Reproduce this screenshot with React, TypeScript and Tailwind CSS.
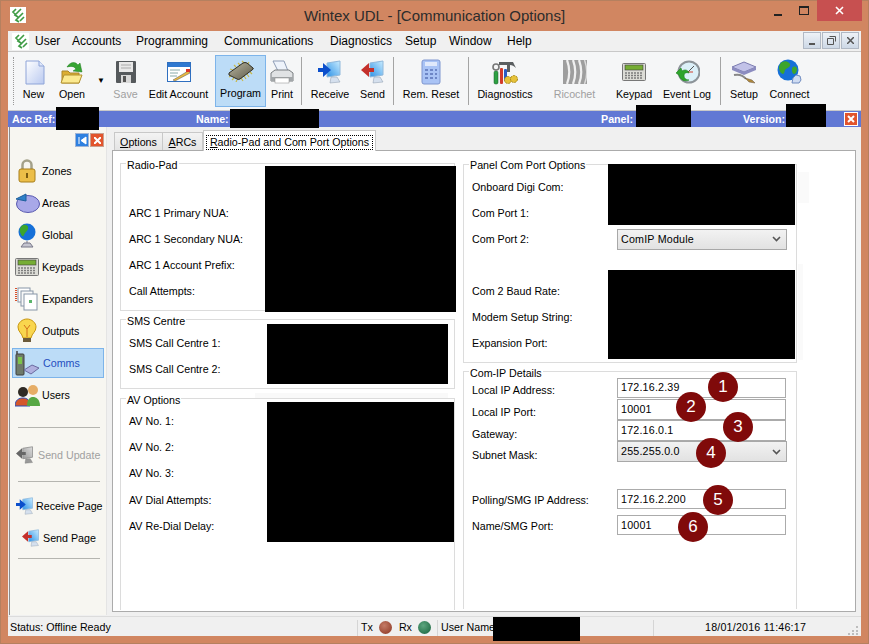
import React from "react";

const font = "font-['Liberation_Sans','Noto_Sans',sans-serif]";

function Logo() {
  return (
    <svg width="14" height="15" viewBox="0 0 14 15">
      <path d="M5 1L2 4l2 2M10 1L4 7l3 2M12 5L5 12l3 2M13 9l-4 4" stroke="#3f9c45" strokeWidth="1.7" fill="none" />
    </svg>
  );
}

function Doc() {
  return (
    <svg width="24" height="25" viewBox="0 0 24 25" className="ml-[3px]">
      <defs>
        <linearGradient id="doc" x1="0" y1="0" x2="1" y2="1">
          <stop offset="0" stopColor="#ffffff" />
          <stop offset="1" stopColor="#b9c9f0" />
        </linearGradient>
      </defs>
      <path d="M3 1h13l5 5v18H3z" fill="url(#doc)" stroke="#8ea4d8" />
      <path d="M16 1v5h5" fill="#dfe8fa" stroke="#8ea4d8" />
    </svg>
  );
}

function Folder() {
  return (
    <svg width="24" height="24" viewBox="0 0 24 24">
      <path d="M2 11h6l2 2h9v10H2z" fill="#dcae33" stroke="#a9862a" />
      <path d="M1 23l3-8h18l-3 8z" fill="#fbe98f" stroke="#b3912f" />
      <path d="M7 7c3-5 8-6 11-2l2-2 2 9-9-1 3-2c-2-3-5-3-9-2z" fill="#37a533" stroke="#1f7a1f" strokeWidth=".5" />
    </svg>
  );
}

function Floppy() {
  return (
    <svg width="22" height="24" viewBox="0 0 22 24">
      <rect x="1" y="1" width="20" height="22" rx="1" fill="#55595c" />
      <rect x="4" y="2" width="14" height="10" fill="#e8e8e8" />
      <path d="M6 5h10M6 8h10" stroke="#aaa" />
      <rect x="6" y="15" width="10" height="8" fill="#d8d8d8" />
      <rect x="8" y="16" width="3" height="6" fill="#555" />
    </svg>
  );
}

function EditAcct() {
  return (
    <svg width="24" height="20" viewBox="0 0 24 20">
      <rect x=".5" y=".5" width="23" height="19" fill="#fff" stroke="#2f6fc0" />
      <rect x="1" y="1" width="22" height="4" fill="#2f78d0" />
      <path d="M3 8h10M3 11h8M3 14h7" stroke="#8aa" />
      <path d="M6 18l15-9 2 2-15 8z" fill="#e8b840" stroke="#555" strokeWidth=".5" />
      <rect x="19" y="7" width="4" height="3" fill="#d9332b" />
    </svg>
  );
}

function Chip() {
  return (
    <svg width="26" height="22" viewBox="0 0 26 22">
      <defs>
        <linearGradient id="chip" x1="0" y1="0" x2="1" y2="1">
          <stop offset="0" stopColor="#b9b6a2" />
          <stop offset="1" stopColor="#5d5a48" />
        </linearGradient>
      </defs>
      <path d="M3 16l-2 1M6 18l-2 2M9 20l-1 2M13 18l2 3M16 16l2 3M19 14l2 3M22 12l2 2M5 10L2 9M8 7L6 5M12 5l-2-2M16 3l-2-2M20 4l1-2" stroke="#c9b84a" strokeWidth="1.2" />
      <path d="M1 13L15 3q2-1 4 0l6 5q1 1-1 2L12 19q-2 1-3 0l-8-4z" fill="url(#chip)" stroke="#2f2d22" />
    </svg>
  );
}

function Printer() {
  return (
    <svg width="24" height="25" viewBox="0 0 24 25">
      <path d="M3 1h11l4 10H8z" fill="#eef3fb" stroke="#8d9cb5" />
      <path d="M1 13l4-3h14l4 3v8H1z" fill="#e0e2e4" stroke="#787d80" />
      <rect x="1" y="17" width="22" height="4" fill="#a3a7aa" />
      <rect x="5" y="18" width="14" height="5" fill="#fff" stroke="#888" strokeWidth=".5" />
    </svg>
  );
}

function Monitor({ dir, small = false, gray = false }: { dir: "in" | "out"; small?: boolean; gray?: boolean }) {
  const s = small ? 18 : 24;
  const arrow = gray ? "#666" : dir === "in" ? "#0b4fcc" : "#c4302b";
  return (
    <svg width={s} height={s} viewBox="0 0 24 24">
      <defs>
        <linearGradient id="scr" x1="1" y1="0" x2="0" y2="1">
          <stop offset="0" stopColor="#c9ecff" />
          <stop offset="1" stopColor="#2d92e6" />
        </linearGradient>
        <linearGradient id="scrg" x1="1" y1="0" x2="0" y2="1">
          <stop offset="0" stopColor="#dddddd" />
          <stop offset="1" stopColor="#999999" />
        </linearGradient>
      </defs>
      <path d="M9 3l13-2v14L9 17z" fill={gray ? "url(#scrg)" : "url(#scr)"} stroke={gray ? "#888" : "#8fb8dc"} />
      <path d="M13 17h6l3 5-10 1z" fill={gray ? "#999" : "#d5e0ee"} stroke={gray ? "#777" : "#8899aa"} strokeWidth=".5" />
      {dir === "in" ? (
        <path d="M0 8h5V3l8 7-8 7v-5H0z" fill={arrow} />
      ) : (
        <path d="M13 8H8V3l-8 7 8 7v-5h5z" fill={arrow} />
      )}
    </svg>
  );
}

function Calc() {
  return (
    <svg width="20" height="26" viewBox="0 0 20 26">
      <rect x="1" y="1" width="18" height="24" rx="2" fill="#a9c3f5" stroke="#7f96cf" />
      <rect x="4" y="3" width="12" height="4" fill="#e0e9fb" />
      <path d="M4 11h3M9 11h3M14 11h2M4 15h3M9 15h3M14 15h2M4 19h3M9 19h3M14 19h2" stroke="#6d86c6" strokeWidth="2" />
    </svg>
  );
}

function Tools() {
  return (
    <svg width="26" height="25" viewBox="0 0 26 25">
      <path d="M7 2h14l3 6c-2-2-4-3-6-3v7h-3V5H7z" fill="#5a5e60" />
      <circle cx="4" cy="7" r="3" fill="none" stroke="#777" strokeWidth="1.6" />
      <rect x="2" y="11" width="4" height="13" rx="1.5" fill="#2ea043" stroke="#1a5c2a" strokeWidth=".5" />
      <rect x="8" y="8" width="3" height="16" rx="1" fill="#d23a2a" />
      <rect x="12" y="9" width="3" height="12" rx="1" fill="#2c5bc4" />
      <circle cx="16" cy="20" r="3.5" fill="#e6c23a" stroke="#a5861c" strokeDasharray="2 1" />
      <circle cx="22" cy="19" r="3.5" fill="#e6c23a" stroke="#a5861c" strokeDasharray="2 1" />
    </svg>
  );
}

function Ricochet() {
  return (
    <svg width="24" height="24" viewBox="0 0 24 24">
      <rect width="24" height="24" fill="#9e9e9e" />
      <path d="M4 0c3 8 3 16 0 24M10 0c3 8 3 16 0 24M16 0c3 8 3 16 0 24" stroke="#f0f0f0" strokeWidth="2.2" fill="none" />
      <path d="M21.5 0c3 8 3 16 0 24" stroke="#dcdcdc" strokeWidth="1.4" fill="none" />
    </svg>
  );
}

function KeypadIcon() {
  return (
    <svg width="24" height="18" viewBox="0 0 24 18">
      <rect x=".5" y=".5" width="23" height="17" rx="1" fill="#dcdcd6" stroke="#777" />
      <rect x="3" y="2" width="18" height="5" fill="#76ad34" stroke="#3c3c3c" strokeWidth=".6" />
      <path d="M3 10h18M3 12.5h18M3 15h18" stroke="#7c7c7c" strokeWidth="1.4" strokeDasharray="2 1" />
    </svg>
  );
}

function EventLog() {
  return (
    <svg width="25" height="25" viewBox="0 0 25 25">
      <circle cx="14" cy="12" r="10.5" fill="#dcf0f8" stroke="#8d9499" strokeWidth="2" />
      <path d="M13 12l6-6" stroke="#555" strokeWidth="1" />
      <path d="M13 12h5" stroke="#d0402f" strokeWidth="1" />
      <path d="M1 13l5-5 1 3c3-2 6-1 7 2-3-1-5 0-5 3 0 2 2 4 5 4-4 2-9 0-10-5z" fill="#2ea52c" stroke="#1c7f1c" strokeWidth=".6" />
    </svg>
  );
}

function SetupIcon() {
  return (
    <svg width="26" height="24" viewBox="0 0 26 24">
      <path d="M1 7l12-5 12 5-12 5z" fill="#c2c2e8" stroke="#7b7bb0" />
      <path d="M1 7v3l12 5 12-5V7l-12 5z" fill="#8c8cc0" />
      <path d="M3 15c5-1 9 0 12 4" stroke="#888" strokeWidth="2" fill="none" />
      <path d="M14 18l7 2 3 3-6-1z" fill="#b08a3c" stroke="#654" strokeWidth=".5" />
    </svg>
  );
}

function Globe() {
  return (
    <svg width="25" height="26" viewBox="0 0 25 26">
      <circle cx="11" cy="11" r="10.5" fill="#1670d8" />
      <path d="M5 3c4-2 7 0 8 2s-2 4-4 5-1 5-3 5-4-4-4-6 1-5 3-6zM16 8c2-1 4 0 4 2s-1 5-3 5-3-6-1-7z" fill="#3da52c" />
      <path d="M15 24l1-5 3-3 4 1 1 4-2 3z" fill="#cfdcf2" stroke="#6f8bc0" />
    </svg>
  );
}

function Lock() {
  return (
    <svg width="18" height="24" viewBox="0 0 18 24">
      <path d="M4.500 10V6a4.500 4.500 0 0 1 9 0v4" fill="none" stroke="#a4a18a" strokeWidth="2.500" />
      <rect x="1" y="10" width="16" height="13" rx="2" fill="#ecbe48" stroke="#a87e1b" />
      <rect x="8" y="14" width="2" height="5" fill="#7a5a10" />
    </svg>
  );
}

function Pie() {
  return (
    <svg width="25" height="20" viewBox="0 0 25 20">
      <ellipse cx="13" cy="11" rx="11.5" ry="8.500" fill="#a8a8e8" stroke="#5a5ab0" />
      <path d="M1 6l10-5v7z" fill="#2e80c8" stroke="#1f5f9c" />
    </svg>
  );
}

function Desk() {
  return (
    <svg width="20" height="25" viewBox="0 0 20 25">
      <circle cx="10" cy="9" r="8.500" fill="#1670d8" />
      <path d="M6 2c3-1 6 1 5 4s-3 3-4 6-3 0-4-3 1-6 3-7z" fill="#3da52c" />
      <path d="M10 18v2M4 24h12l-3-4H7z" fill="#c5c5d0" stroke="#778" />
    </svg>
  );
}

function Expander() {
  return (
    <svg width="24" height="24" viewBox="0 0 24 24">
      <path d="M1 1v14" stroke="#d94f2a" strokeWidth="2" strokeDasharray="1 1" />
      <rect x="3" y="1" width="12" height="14" fill="#fff" stroke="#8896a8" />
      <rect x="6" y="4" width="12" height="15" fill="#f8f8f8" stroke="#8896a8" />
      <rect x="9" y="7" width="13" height="16" fill="#fff" stroke="#8896a8" />
      <rect x="14" y="13" width="3" height="3" fill="#5bb56b" />
    </svg>
  );
}

function Bulb() {
  return (
    <svg width="20" height="26" viewBox="0 0 20 26">
      <path d="M10 1c5 0 9 4 9 8 0 5-4 6-5 11H6C5 15 1 14 1 9c0-4 4-8 9-8z" fill="#f9d64e" stroke="#c8960f" />
      <path d="M7 7l3 4 3-4M10 11v8" stroke="#d2701a" fill="none" />
      <rect x="6" y="20" width="8" height="4" fill="#6b5a3a" />
    </svg>
  );
}

function Phone() {
  return (
    <svg width="26" height="25" viewBox="0 0 26 25">
      <rect x="2" y="3" width="8" height="21" rx="1" fill="#6f7a6a" stroke="#3f3f3f" />
      <rect x="4" y="6" width="4" height="7" fill="#7cc34a" />
      <path d="M3 3V0" stroke="#444" strokeWidth="1.500" />
      <path d="M10 19l8-5 7 3-8 6z" fill="#b0b0de" stroke="#6a6aa0" />
    </svg>
  );
}

function UsersIcon() {
  return (
    <svg width="25" height="23" viewBox="0 0 25 23">
      <circle cx="8" cy="8" r="5" fill="#2f2a24" />
      <path d="M0 22c0-6 4-8 8-8s7 2 7 8z" fill="#d4572a" stroke="#2c4fb8" />
      <circle cx="18" cy="6" r="5" fill="#e6ad66" />
      <path d="M12 22c0-7 3-9 6-9s7 2 7 9z" fill="#56a743" />
    </svg>
  );
}

function ToolBtn({ label, icon, w, active, disabled }: { label: string; icon: React.ReactNode; w: string; active?: boolean; disabled?: boolean }) {
  return (
    <div
      className={`flex h-[52px] shrink-0 flex-col items-center justify-end pb-[6px] ${w} ${
        active ? "border border-[#7db4ea] bg-[#bcdcf7]" : ""
      } ${disabled ? "text-[#a0a0a0]" : "text-black"}`}
    >
      <div className="flex h-[28px] items-center">{icon}</div>
      <span className="mt-[2px] whitespace-nowrap text-[10.7px] leading-[13px]">{label}</span>
    </div>
  );
}

function Sep() {
  return <div className="mx-[3px] h-[48px] w-px shrink-0 bg-[#a4a4a4]" />;
}

function Black({ className }: { className: string }) {
  return <div className={`absolute bg-black ${className}`} />;
}

function SideItem({ icon, label, active, disabled, box = "h-[32px] pl-[2px]", gap = "ml-[2px]" }: { icon: React.ReactNode; label: string; active?: boolean; disabled?: boolean; box?: string; gap?: string }) {
  return (
    <div
      className={`mx-[2px] flex w-[92px] items-center ${box} ${
        active ? "border border-[#7db4ea] bg-[#bcdcf7] text-[#1f4fc0]" : disabled ? "text-[#a0a0a0]" : "text-black"
      }`}
    >
      <span className="flex w-[26px] shrink-0 justify-center">{icon}</span>
      <span className={`whitespace-nowrap text-[10.7px] ${gap}`}>{label}</span>
    </div>
  );
}

function Rule({ className }: { className: string }) {
  return <div className={`ml-[8px] h-px w-[82px] bg-[#b5b5b0] ${className}`} />;
}

function Group({ title, className, titleTop = "top-[-5px]", children }: { title: string; className: string; titleTop?: string; children?: React.ReactNode }) {
  return (
    <div className={`relative flex flex-col border border-[#dcdcdc] pl-[8px] ${className}`}>
      <span className={`absolute left-[5px] bg-white px-[1px] text-[10.7px] leading-[13px] ${titleTop}`}>{title}</span>
      {children}
    </div>
  );
}

function Row({ label, className = "h-[26px]", children }: { label?: string; className?: string; children?: React.ReactNode }) {
  return (
    <div className={`flex shrink-0 items-center text-[10.7px] ${className}`}>
      <span className="w-[145px] shrink-0 whitespace-nowrap leading-[13px]">{label}</span>
      {children}
    </div>
  );
}

function Field({ value, h = "h-[21px]" }: { value: string; h?: string }) {
  return (
    <div className={`flex w-[169px] items-center border border-[#ababab] bg-white pl-[3px] text-[10.7px] tracking-[0.2px] ${h}`}>
      {value}
    </div>
  );
}

function Combo({ value }: { value: string }) {
  return (
    <div className="flex h-[21px] w-[170px] items-center justify-between border border-[#a8a8a8] bg-gradient-to-b from-[#f2f2f2] to-[#e2e2e2] px-[3px] text-[10.7px] tracking-[0.2px]">
      {value}
      <svg width="9" height="6" viewBox="0 0 9 6" className="mr-[2px]">
        <path d="M1 1l3.500 3.500L8 1" stroke="#555" strokeWidth="1.600" fill="none" />
      </svg>
    </div>
  );
}

function Badge({ n, className }: { n: number; className: string }) {
  return (
    <div className={`absolute flex h-[30px] w-[30px] items-center justify-center rounded-full bg-[#800a0a] text-[17px] text-white ${className}`}>
      {n}
    </div>
  );
}

const menus = [
  { label: "User", w: "w-[37px]" },
  { label: "Accounts", w: "w-[64px]" },
  { label: "Programming", w: "w-[88px]" },
  { label: "Communications", w: "w-[106px]" },
  { label: "Diagnostics", w: "w-[75px]" },
  { label: "Setup", w: "w-[44px]" },
  { label: "Window", w: "w-[58px]" },
  { label: "Help", w: "w-[30px]" },
];

export default function App() {
  return (
    <div className={`relative h-[644px] w-[869px] overflow-hidden bg-[#d18661] text-black shadow-[inset_0_0_0_1px_#b5805f] ${font}`}>
      {/* title bar */}
      <div className="relative flex h-[31px] items-center justify-center text-[15px] text-[#2c2c2c]">
        <span className="pt-[1px]">Wintex UDL - [Communication Options]</span>
        <div className="absolute left-[10px] top-[7px] flex h-[16px] w-[16px] items-center justify-center bg-white">
          <Logo />
        </div>
        <div className="absolute right-[7px] top-0 flex items-start">
          <div className="flex h-[21px] w-[27px] items-center justify-center"><div className="mt-[8px] h-[2px] w-[8px] bg-[#222]" /></div>
          <div className="flex h-[21px] w-[26px] items-center justify-center"><div className="h-[9px] w-[10px] border border-t-2 border-[#222]" /></div>
          <div className="flex h-[21px] w-[45px] items-center justify-center bg-[#c75050]">
            <svg width="9" height="9" viewBox="0 0 9 9"><path d="M1 1l7 7M8 1L1 8" stroke="#fff" strokeWidth="1.6" /></svg>
          </div>
        </div>
      </div>
      {/* client */}
      <div className="mx-[8px] flex h-[605px] w-[853px] flex-col bg-[#f0f0f0]">
        <div className="relative flex h-[21px] shrink-0 items-center border-b border-[#c8c8c8] text-[12px]">
          <div className="ml-[4px] flex h-[17px] w-[17px] items-center justify-center bg-white"><Logo /></div>
          <div className="ml-[6px] flex">
            {menus.map((m) => (
              <span key={m.label} className={m.w}>{m.label}</span>
            ))}
          </div>
          <div className="absolute right-[2px] top-[1px] flex gap-px">
            {[
              <div key="a" className="mt-[6px] h-[2px] w-[6px] bg-[#555]" />,
              <svg key="b" width="9" height="9" viewBox="0 0 9 9"><path d="M2.500.5h6v5M.5 2.500h6v6h-6z" stroke="#555" fill="none" /></svg>,
              <svg key="c" width="7" height="7" viewBox="0 0 7 7"><path d="M0 0l7 7M7 0L0 7" stroke="#555" strokeWidth="1.5" /></svg>,
            ].map((ic, i) => (
              <div key={i} className="flex h-[17px] w-[18px] items-center justify-center border border-[#b0b8c4] bg-gradient-to-b from-[#eef2f7] to-[#cdd8e6]">{ic}</div>
            ))}
          </div>
        </div>
        {/* toolbar */}
        <div className="flex h-[58px] shrink-0 items-center bg-[#f5f6f7] pl-[5px]">
          <div className="h-[48px] w-[5px] shrink-0 border-l border-dotted border-[#999]" />
          <ToolBtn label="New" icon={<Doc />} w="w-[31px]" />
          <ToolBtn label="Open" icon={<Folder />} w="w-[46px]" />
          <span className="w-[12px] shrink-0 text-center text-[8px]">▼</span>
          <ToolBtn label="Save" icon={<Floppy />} w="w-[37px]" disabled />
          <ToolBtn label="Edit Account" icon={<EditAcct />} w="w-[69px]" />
          <div className="w-[2px] shrink-0" />
          <ToolBtn label="Program" icon={<Chip />} w="w-[51px]" active />
          <ToolBtn label="Print" icon={<Printer />} w="w-[32px]" />
          <Sep />
          <ToolBtn label="Receive" icon={<Monitor dir="in" />} w="w-[50px]" />
          <ToolBtn label="Send" icon={<Monitor dir="out" />} w="w-[35px]" />
          <Sep />
          <ToolBtn label="Rem. Reset" icon={<Calc />} w="w-[68px]" />
          <Sep />
          <ToolBtn label="Diagnostics" icon={<Tools />} w="w-[66px]" />
          <ToolBtn label="Ricochet" icon={<Ricochet />} w="w-[73px]" disabled />
          <ToolBtn label="Keypad" icon={<KeypadIcon />} w="w-[46px]" />
          <ToolBtn label="Event Log" icon={<EventLog />} w="w-[60px]" />
          <Sep />
          <ToolBtn label="Setup" icon={<SetupIcon />} w="w-[40px]" />
          <ToolBtn label="Connect" icon={<Globe />} w="w-[51px]" />
        </div>
        {/* account bar */}
        <div className="flex h-[17px] shrink-0 items-center border-t border-[#c9c9c9] bg-[#6178d4] pl-[4px] text-[10.7px] font-bold text-white">
          <span className="w-[184px] shrink-0">Acc Ref:</span>
          <span className="w-[405px] shrink-0">Name:</span>
          <span className="w-[142px] shrink-0">Panel:</span>
          <span className="w-[101px] shrink-0">Version:</span>
          <div className="flex h-[14px] w-[14px] shrink-0 items-center justify-center border border-white bg-[#e2542c]">
            <svg width="8" height="8" viewBox="0 0 8 8"><path d="M1 1l6 6M7 1L1 7" stroke="#fff" strokeWidth="2" /></svg>
          </div>
        </div>
        <div className="flex h-[489px] shrink-0">
          {/* sidebar */}
          <div className="ml-px h-[488px] w-[98px] shrink-0 border-l border-r border-[#8a8a8a] border-r-[#e4e4e4] bg-[#f7f6f1]">
            <div className="flex h-[28px] justify-end gap-px pr-[2px] pt-[6px]">
              <div className="flex h-[14px] w-[14px] items-center justify-center border border-[#9fb4d6] bg-[#2e80e0]">
                <svg width="9" height="9" viewBox="0 0 9 9"><path d="M1 1v7M8 1v7L3 4.500z" stroke="#fff" fill="#fff" /></svg>
              </div>
              <div className="flex h-[14px] w-[14px] items-center justify-center border border-[#c9a090] bg-[#e2542c]">
                <svg width="7" height="7" viewBox="0 0 7 7"><path d="M0 0l7 7M7 0L0 7" stroke="#fff" strokeWidth="2" /></svg>
              </div>
            </div>
            <SideItem icon={<Lock />} label="Zones" />
            <SideItem icon={<Pie />} label="Areas" />
            <SideItem icon={<Desk />} label="Global" />
            <SideItem icon={<KeypadIcon />} label="Keypads" />
            <SideItem icon={<Expander />} label="Expanders" />
            <SideItem icon={<Bulb />} label="Outputs" />
            <SideItem icon={<Phone />} label="Comms" active box="my-px h-[30px] pl-px" gap="ml-[3px]" />
            <SideItem icon={<UsersIcon />} label="Users" />
            <Rule className="mb-[11px] mt-[16px]" />
            <SideItem icon={<Monitor dir="out" small gray />} label="Send Update" disabled box="h-[32px]" gap="ml-0" />
            <Rule className="mb-[8px] mt-[10px]" />
            <SideItem icon={<Monitor dir="in" small />} label="Receive Page" box="h-[32px]" gap="ml-[-2px]" />
            <SideItem icon={<Monitor dir="out" small />} label="Send Page" box="h-[32px] pl-[6px]" gap="ml-[-1px]" />
            <Rule className="mt-[4px]" />
          </div>
          {/* main pane */}
          <div className="ml-[5px] flex flex-col pt-[3px]">
            <div className="ml-[2px] flex h-[20px] items-end text-[10.7px]">
              <div className="flex h-[18px] w-[49px] items-center justify-center border border-b-0 border-[#c8c8c8] bg-gradient-to-b from-[#f3f3f3] to-[#e4e4e4] pt-[2px]"><span><u>O</u>ptions</span></div>
              <div className="flex h-[18px] w-[40px] items-center justify-center border border-b-0 border-l-0 border-[#c8c8c8] bg-gradient-to-b from-[#f3f3f3] to-[#e4e4e4] pt-[2px]"><span><u>A</u>RCs</span></div>
              <div className="relative z-10 -mb-px flex h-[21px] w-[173px] items-start justify-center border border-b-0 border-[#c8c8c8] bg-white pt-[4px]">
                <span className="whitespace-nowrap border border-dotted border-black px-[3px] leading-[13px]"><u>R</u>adio-Pad and Com Port Options</span>
              </div>
            </div>
            {/* tab page */}
            <div className="flex h-[462px] w-[744px] gap-[8px] overflow-hidden border border-[#ababab] bg-white pl-[7px] pt-[12px]">
              <div className="flex w-[335px] shrink-0 flex-col gap-[8px]">
                <Group title="Radio-Pad" className="h-[148px] pt-[36px]">
                  <Row label="ARC 1 Primary NUA:" />
                  <Row label="ARC 1 Secondary NUA:" />
                  <Row label="ARC 1 Account Prefix:" />
                  <Row label="Call Attempts:" />
                </Group>
                <Group title="SMS Centre" className="h-[70px] pt-[10px]">
                  <Row label="SMS Call Centre 1:" />
                  <Row label="SMS Call Centre 2:" />
                </Group>
                <Group title="AV Options" className="mt-[1px] h-[212px] border-b-0 pt-[9px]">
                  <Row label="AV No. 1:" />
                  <Row label="AV No. 2:" />
                  <Row label="AV No. 3:" className="h-[27px]" />
                  <Row label="AV Dial Attempts:" />
                  <Row label="AV Re-Dial Delay:" />
                </Group>
              </div>
              <div className="flex w-[334px] shrink-0 flex-col gap-[8px]">
                <Group title="Panel Com Port Options" titleTop="top-[-6px]" className="mt-px h-[199px] pt-[9px]">
                  <Row label="Onboard Digi Com:" />
                  <Row label="Com Port 1:" />
                  <Row label="Com Port 2:"><Combo value="ComIP Module" /></Row>
                  <Row />
                  <Row label="Com 2 Baud Rate:" />
                  <Row label="Modem Setup String:" />
                  <Row label="Expansion Port:" />
                </Group>
                <Group title="Com-IP Details" className="h-[238px] border-b-0 pt-[5px]">
                  <Row label="Local IP Address:" className="h-[21px] [&>span]:pt-[6px]"><Field value="172.16.2.39" h="h-[20px]" /></Row>
                  <Row label="Local IP Port:" className="h-[22px] [&>span]:pt-[6px]"><Field value="10001" /></Row>
                  <Row label="Gateway:" className="h-[21px] [&>span]:pt-[8px]"><Field value="172.16.0.1" /></Row>
                  <Row label="Subnet Mask:" className="h-[21px] [&>span]:pt-[8px]"><Combo value="255.255.0.0" /></Row>
                  <Row label="Polling/SMG IP Address:" className="mt-[27px] h-[20px] [&>span]:pt-[2px]"><Field value="172.16.2.200" h="h-[20px]" /></Row>
                  <Row label="Name/SMG Port:" className="mt-[6px] h-[20px] [&>span]:pt-[2px]"><Field value="10001" h="h-[20px]" /></Row>
                </Group>
              </div>
            </div>
          </div>
        </div>
        {/* status bar */}
        <div className="flex h-[20px] shrink-0 items-center border-t border-[#dcdcdc] pt-[2px] text-[10.7px]">
          <span className="ml-[2px] w-[347px] shrink-0">Status: Offline Ready</span>
          <div className="flex h-[16px] w-[80px] shrink-0 items-center border-l border-[#d5d5d5] pl-[3px]">
            Tx
            <div className="ml-[6px] h-[13px] w-[13px] rounded-full bg-[radial-gradient(circle_at_40%_35%,#c47b66,#8a3320)]" />
            <span className="ml-[7px]">Rx</span>
            <div className="ml-[6px] h-[13px] w-[13px] rounded-full bg-[radial-gradient(circle_at_40%_35%,#5da67f,#15603a)]" />
          </div>
          <div className="flex h-[16px] w-[216px] shrink-0 items-center border-l border-[#d5d5d5] pl-[3px]">User Name</div>
          <div className="flex h-[16px] flex-1 items-center justify-between border-l border-[#d5d5d5] pl-[51px] pr-[3px] tracking-[0.2px]">
            18/01/2016 11:46:17
            <svg width="10" height="10" viewBox="0 0 10 10" className="mt-[5px]">
              <path d="M8 1h2v2H8zM4 5h2v2H4zM8 5h2v2H8zM0 8h2v2H0zM4 8h2v2H4zM8 8h2v2H8z" fill="#bdbdbd" />
            </svg>
          </div>
        </div>
      </div>
      {/* faint leftovers round the redaction blocks */}
      <div className="absolute left-[255px] top-[393px] h-[5px] w-[193px] bg-[#f9f9f9]" />
      <div className="absolute left-[798px] top-[172px] h-[31px] w-[11px] bg-[#fafafa]" />
      <div className="absolute left-[798px] top-[264px] h-[96px] w-[5px] bg-[#fafafa]" />
      {/* redaction blocks laid over the text */}
      <Black className="left-[56px] top-[107px] h-[23px] w-[43px]" />
      <Black className="left-[230px] top-[109px] h-[19px] w-[89px]" />
      <Black className="left-[636px] top-[105px] h-[22px] w-[55px]" />
      <Black className="left-[786px] top-[104px] h-[23px] w-[40px]" />
      <Black className="left-[265px] top-[166px] h-[146px] w-[191px]" />
      <Black className="left-[267px] top-[324px] h-[60px] w-[181px]" />
      <Black className="left-[267px] top-[402px] h-[140px] w-[187px]" />
      <Black className="left-[608px] top-[164px] h-[61px] w-[187px]" />
      <Black className="left-[608px] top-[270px] h-[89px] w-[187px]" />
      <Black className="left-[493px] top-[617px] h-[24px] w-[87px]" />
      <Badge n={1} className="left-[708px] top-[372px]" />
      <Badge n={2} className="left-[676px] top-[392px]" />
      <Badge n={3} className="left-[723px] top-[412px]" />
      <Badge n={4} className="left-[696px] top-[438px]" />
      <Badge n={5} className="left-[703px] top-[485px]" />
      <Badge n={6} className="left-[678px] top-[512px]" />
    </div>
  );
}
